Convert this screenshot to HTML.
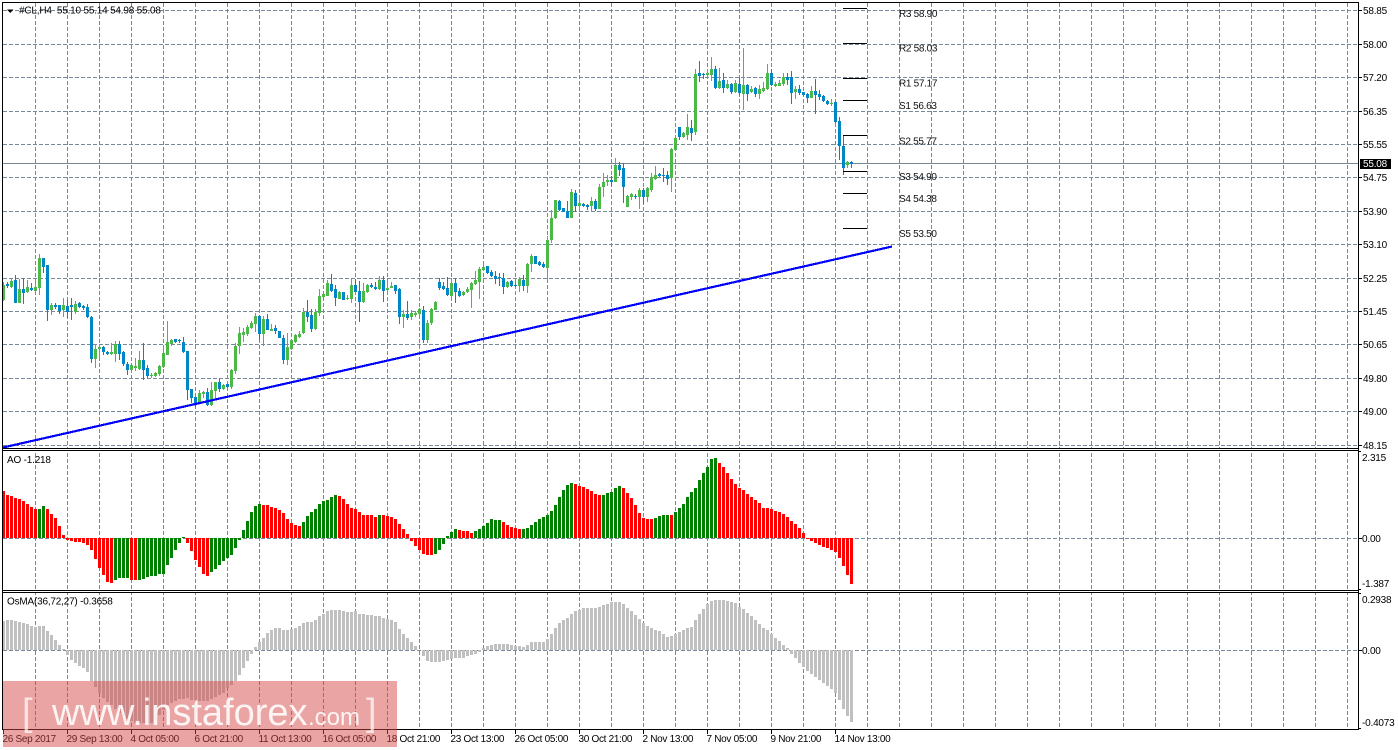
<!DOCTYPE html>
<html><head><meta charset="utf-8"><title>#CL,H4</title>
<style>
html,body{margin:0;padding:0;background:#fff;width:1398px;height:750px;overflow:hidden}
svg{display:block}
text{font-family:"Liberation Sans",sans-serif;font-size:10px;fill:#000}
.t{letter-spacing:-.3px}
.v{letter-spacing:-.2px}
.p{letter-spacing:-.3px;fill:#111}
</style></head><body>
<svg width="1398" height="750" viewBox="0 0 1398 750" xmlns="http://www.w3.org/2000/svg">
<rect width="1398" height="750" fill="#fff"/>
<g shape-rendering="crispEdges" fill="none">
<!-- grid -->
<path stroke="#778899" stroke-width="1" stroke-dasharray="4 2" d="M35.5 3V729M67.5 3V729M99.5 3V729M131.5 3V729M163.5 3V729M195.5 3V729M227.5 3V729M259.5 3V729M291.5 3V729M323.5 3V729M355.5 3V729M387.5 3V729M419.5 3V729M451.5 3V729M483.5 3V729M515.5 3V729M547.5 3V729M579.5 3V729M611.5 3V729M643.5 3V729M675.5 3V729M707.5 3V729M739.5 3V729M771.5 3V729M803.5 3V729M835.5 3V729M867.5 3V729M899.5 3V729M931.5 3V729M963.5 3V729M995.5 3V729M1027.5 3V729M1059.5 3V729M1091.5 3V729M1123.5 3V729M1155.5 3V729M1187.5 3V729M1219.5 3V729M1251.5 3V729M1283.5 3V729M1315.5 3V729M1347.5 3V729"/>
<path stroke="#778899" stroke-width="1" stroke-dasharray="4 2" d="M3 10.5H1358M3 44.5H1358M3 77.5H1358M3 111.5H1358M3 144.5H1358M3 177.5H1358M3 211.5H1358M3 244.5H1358M3 278.5H1358M3 311.5H1358M3 344.5H1358M3 378.5H1358M3 411.5H1358M3 445.5H1358M3 538.5H1358M3 650.5H1358"/>
<path stroke="#778899" d="M3 163.5H1358"/>
<!-- green candles -->
<path stroke="#4cb848" stroke-width="1" d="M3.5 282V301M11.5 278V288M19.5 279V303M27.5 280V293M35.5 282V292M39.5 254V295M51.5 303V315M63.5 298V317M75.5 301V314M95.5 344V368M99.5 345V359M111.5 343V355M115.5 341V362M131.5 364V372M135.5 358V371M139.5 351V370M151.5 373V378M155.5 372V377M159.5 365V376M163.5 347V368M167.5 321V355M171.5 339V346M199.5 390V403M203.5 391V398M211.5 382V406M215.5 382V400M223.5 384V390M231.5 369V389M235.5 343V374M239.5 327V354M243.5 328V342M247.5 325V336M251.5 321V329M255.5 313V332M263.5 316V346M271.5 324V331M287.5 333V365M291.5 339V350M295.5 334V343M299.5 331V338M303.5 308V334M315.5 309V330M319.5 289V316M323.5 292V298M327.5 280V296M339.5 291V299M347.5 295V300M351.5 279V303M363.5 283V303M367.5 284V293M379.5 276V290M387.5 282V293M391.5 282V288M403.5 310V328M411.5 310V320M415.5 311V317M419.5 308V317M427.5 320V343M431.5 308V325M435.5 301V310M451.5 278V297M463.5 291V296M467.5 287V293M471.5 282V308M475.5 271V285M479.5 267V299M483.5 264V271M507.5 281V288M519.5 277V292M527.5 263V293M531.5 254V272M547.5 236V280M551.5 210V243M555.5 200V219M571.5 189V218M579.5 198V210M591.5 197V211M599.5 184V209M603.5 173V197M607.5 175V186M615.5 158V182M627.5 195V207M631.5 193V200M639.5 188V209M647.5 187V202M651.5 173V192M655.5 166V180M671.5 148V192M675.5 135V150M683.5 132V138M687.5 114V140M695.5 69V135M707.5 70V76M711.5 57V81M719.5 68V89M727.5 80V89M735.5 80V93M743.5 48V110M751.5 86V93M759.5 85V99M763.5 82V92M767.5 64V90M775.5 82V87M779.5 80V86M783.5 73V86M795.5 86V99M811.5 86V98M831.5 99V106M847.5 161V168"/>
<path stroke="#4cb848" stroke-width="3" d="M3.5 285V300M11.5 281V287M19.5 289V303M27.5 287V292M35.5 287V291M39.5 258V288M51.5 305V310M63.5 305V310M75.5 304V312M95.5 349V359M99.5 347V349M111.5 352V354M115.5 344V354M131.5 365V370M135.5 366V368M139.5 360V369M151.5 375V376M155.5 373V376M159.5 366V374M163.5 353V367M167.5 342V355M171.5 340V344M199.5 393V402M203.5 392V394M211.5 390V405M215.5 382V391M223.5 385V389M231.5 370V387M235.5 346V371M239.5 333V346M243.5 332V335M247.5 327V334M251.5 323V328M255.5 316V324M263.5 319V334M271.5 329V331M287.5 347V360M291.5 340V349M295.5 335V342M299.5 334V337M303.5 312V333M315.5 312V329M319.5 296V313M323.5 294V297M327.5 283V296M339.5 292V299M347.5 298V299M351.5 285V299M363.5 291V302M367.5 285V292M379.5 280V289M387.5 288V290M391.5 286V288M403.5 314V317M411.5 313V317M415.5 313V315M419.5 309V314M427.5 323V340M431.5 309V323M435.5 302V310M451.5 283V296M463.5 292V295M467.5 289V292M471.5 283V290M475.5 280V284M479.5 269V282M483.5 267V270M507.5 282V287M519.5 279V286M527.5 264V286M531.5 256V264M547.5 240V268M551.5 218V240M555.5 200V218M571.5 192V218M579.5 203V206M591.5 201V206M599.5 187V209M603.5 182V187M607.5 180V182M615.5 165V182M627.5 196V207M631.5 194V197M639.5 190V197M647.5 188V197M651.5 177V190M655.5 175V179M671.5 149V178M675.5 138V150M683.5 133V137M687.5 127V135M695.5 74V132M707.5 73V75M711.5 69V75M719.5 81V88M727.5 84V88M735.5 83V92M743.5 85V94M751.5 89V92M759.5 89V94M763.5 88V91M767.5 73V89M775.5 84V86M779.5 83V86M783.5 77V84M795.5 89V92M811.5 91V98M831.5 103V104M847.5 162V165"/>
<!-- blue candles -->
<path stroke="#0085c6" stroke-width="1" d="M7.5 282V288M15.5 275V303M23.5 278V304M31.5 283V291M43.5 258V273M47.5 265V321M55.5 303V309M59.5 305V314M67.5 300V318M71.5 298V320M79.5 302V308M83.5 305V310M87.5 304V318M91.5 316V363M103.5 346V355M107.5 351V355M119.5 341V360M123.5 351V366M127.5 362V375M143.5 343V380M147.5 365V378M175.5 339V343M179.5 339V343M183.5 337V353M187.5 351V400M191.5 389V403M195.5 397V407M207.5 388V406M219.5 379V392M227.5 384V388M259.5 315V340M267.5 314V330M275.5 325V334M279.5 331V338M283.5 335V364M307.5 300V322M311.5 309V332M331.5 274V292M335.5 285V306M343.5 292V300M355.5 279V292M359.5 281V322M371.5 283V288M375.5 282V290M383.5 276V302M395.5 285V294M399.5 288V324M407.5 301V320M423.5 306V343M439.5 278V290M443.5 282V290M447.5 277V296M455.5 278V303M459.5 288V297M487.5 266V274M491.5 270V277M495.5 271V284M499.5 273V286M503.5 273V294M511.5 280V287M515.5 283V287M523.5 275V291M535.5 256V264M539.5 261V266M543.5 262V268M559.5 200V211M563.5 208V212M567.5 201V218M575.5 190V212M583.5 203V207M587.5 204V210M595.5 199V211M611.5 176V186M619.5 162V176M623.5 163V203M635.5 194V199M643.5 188V204M659.5 173V177M663.5 168V182M667.5 171V185M679.5 127V140M691.5 120V141M699.5 61V82M703.5 73V79M715.5 66V89M723.5 73V93M731.5 83V94M739.5 78V95M747.5 84V101M755.5 87V97M771.5 69V86M787.5 73V85M791.5 71V104M799.5 85V95M803.5 92V96M807.5 93V103M815.5 79V114M819.5 90V100M823.5 95V102M827.5 100V105M835.5 102V123M839.5 117V160M843.5 135V175M851.5 161V168"/>
<path stroke="#0085c6" stroke-width="3" d="M7.5 284V286M15.5 280V303M23.5 289V293M31.5 288V290M43.5 258V267M47.5 265V310M55.5 305V307M59.5 305V311M67.5 306V312M71.5 305V307M79.5 303V307M83.5 306V308M87.5 307V317M91.5 317V359M103.5 347V352M107.5 352V354M119.5 344V354M123.5 352V364M127.5 364V370M143.5 360V370M147.5 368V376M175.5 339V342M179.5 340V341M183.5 342V352M187.5 351V390M191.5 389V398M195.5 397V403M207.5 392V405M219.5 382V389M227.5 384V387M259.5 316V334M267.5 319V330M275.5 328V331M279.5 331V338M283.5 338V360M307.5 312V317M311.5 315V329M331.5 284V291M335.5 289V298M343.5 292V300M355.5 285V292M359.5 291V302M371.5 285V287M375.5 287V289M383.5 280V291M395.5 285V291M399.5 289V317M407.5 314V318M423.5 310V340M439.5 282V288M443.5 286V289M447.5 288V295M455.5 283V292M459.5 291V296M487.5 266V273M491.5 272V276M495.5 276V279M499.5 277V278M503.5 278V287M511.5 281V286M515.5 285V286M523.5 280V286M535.5 256V264M539.5 262V265M543.5 264V267M559.5 201V210M563.5 208V212M567.5 211V218M575.5 193V206M583.5 204V206M587.5 205V207M595.5 201V209M611.5 180V182M619.5 165V170M623.5 168V187M635.5 196V197M643.5 190V197M659.5 174V176M663.5 175V176M667.5 175V179M679.5 127V137M691.5 128V133M699.5 73V76M703.5 74V75M715.5 69V88M723.5 80V88M731.5 84V92M739.5 84V93M747.5 85V94M755.5 88V94M771.5 73V85M787.5 77V80M791.5 77V93M799.5 89V93M803.5 92V95M807.5 94V98M815.5 91V95M819.5 94V97M823.5 96V101M827.5 101V104M835.5 102V122M839.5 121V146M843.5 146V168M851.5 162V164"/>
<!-- AO -->
<g transform="translate(0 538)" stroke-width="3">
<path stroke="#ff0000" d="M3.5 0v-47M7.5 0v-43M11.5 0v-42M15.5 0v-40M19.5 0v-39M23.5 0v-37M27.5 0v-34M31.5 0v-31M35.5 0v-29M47.5 0v-29M51.5 0v-24M55.5 0v-20M59.5 0v-12M63.5 0v-3M67.5 0v2M71.5 0v3M75.5 0v4M79.5 0v4M83.5 0v5M87.5 0v7M91.5 0v12M95.5 0v21M99.5 0v30M103.5 0v37M107.5 0v44M111.5 0v45M131.5 0v42M135.5 0v42M187.5 0v5M191.5 0v13M195.5 0v22M199.5 0v29M203.5 0v36M207.5 0v38M263.5 0v-33M267.5 0v-33M271.5 0v-31M275.5 0v-30M279.5 0v-28M283.5 0v-25M287.5 0v-19M291.5 0v-15M295.5 0v-13M299.5 0v-12M339.5 0v-42M343.5 0v-39M347.5 0v-34M351.5 0v-30M355.5 0v-29M359.5 0v-26M363.5 0v-23M367.5 0v-23M371.5 0v-23M375.5 0v-21M383.5 0v-23M387.5 0v-22M391.5 0v-21M395.5 0v-19M399.5 0v-14M403.5 0v-9M407.5 0v-4M411.5 0v3M415.5 0v8M419.5 0v12M423.5 0v16M427.5 0v17M431.5 0v17M459.5 0v-8M463.5 0v-7M467.5 0v-7M471.5 0v-5M503.5 0v-16M507.5 0v-13M511.5 0v-11M515.5 0v-10M519.5 0v-9M575.5 0v-54M579.5 0v-52M583.5 0v-51M587.5 0v-49M591.5 0v-47M595.5 0v-44M599.5 0v-43M623.5 0v-50M627.5 0v-45M631.5 0v-40M635.5 0v-33M639.5 0v-25M643.5 0v-20M647.5 0v-19M651.5 0v-19M671.5 0v-23M719.5 0v-75M723.5 0v-71M727.5 0v-65M731.5 0v-59M735.5 0v-54M739.5 0v-50M743.5 0v-48M747.5 0v-44M751.5 0v-41M755.5 0v-38M759.5 0v-35M763.5 0v-30M767.5 0v-30M771.5 0v-29M775.5 0v-27M779.5 0v-26M783.5 0v-24M787.5 0v-21M791.5 0v-17M795.5 0v-14M799.5 0v-10M803.5 0v-5M807.5 0v1M811.5 0v3M815.5 0v5M819.5 0v7M823.5 0v9M827.5 0v10M831.5 0v12M835.5 0v14M839.5 0v20M843.5 0v28M847.5 0v37M851.5 0v46"/>
<path stroke="#008000" d="M39.5 0v-29M43.5 0v-32M115.5 0v42M119.5 0v40M123.5 0v40M127.5 0v40M139.5 0v42M143.5 0v41M147.5 0v39M151.5 0v38M155.5 0v38M159.5 0v36M163.5 0v36M167.5 0v27M171.5 0v20M175.5 0v12M179.5 0v5M183.5 0v-1M211.5 0v34M215.5 0v31M219.5 0v27M223.5 0v23M227.5 0v20M231.5 0v17M235.5 0v10M239.5 0v2M243.5 0v-8M247.5 0v-17M251.5 0v-26M255.5 0v-32M259.5 0v-34M303.5 0v-16M307.5 0v-22M311.5 0v-26M315.5 0v-29M319.5 0v-34M323.5 0v-37M327.5 0v-38M331.5 0v-41M335.5 0v-43M379.5 0v-23M435.5 0v16M439.5 0v12M443.5 0v6M447.5 0v-2M451.5 0v-6M455.5 0v-9M475.5 0v-7M479.5 0v-9M483.5 0v-12M487.5 0v-15M491.5 0v-19M495.5 0v-18M499.5 0v-18M523.5 0v-9M527.5 0v-10M531.5 0v-13M535.5 0v-16M539.5 0v-19M543.5 0v-21M547.5 0v-23M551.5 0v-27M555.5 0v-33M559.5 0v-41M563.5 0v-48M567.5 0v-53M571.5 0v-55M603.5 0v-43M607.5 0v-45M611.5 0v-46M615.5 0v-50M619.5 0v-52M655.5 0v-20M659.5 0v-22M663.5 0v-23M667.5 0v-23M675.5 0v-26M679.5 0v-30M683.5 0v-34M687.5 0v-41M691.5 0v-46M695.5 0v-50M699.5 0v-58M703.5 0v-65M707.5 0v-71M711.5 0v-79M715.5 0v-80"/>
</g>
<!-- OsMA -->
<g transform="translate(0 650)" stroke-width="3">
<path stroke="#c0c0c0" d="M3.5 0v-29M7.5 0v-30M11.5 0v-30M15.5 0v-29M19.5 0v-28M23.5 0v-27M27.5 0v-26M31.5 0v-24M35.5 0v-23M39.5 0v-24M43.5 0v-24M47.5 0v-19M51.5 0v-15M55.5 0v-10M59.5 0v-5M63.5 0v-1M67.5 0v5M71.5 0v10M75.5 0v13M79.5 0v16M83.5 0v18M87.5 0v22M91.5 0v31M95.5 0v37M99.5 0v43M103.5 0v48M107.5 0v52M111.5 0v55M115.5 0v59M119.5 0v63M123.5 0v66M127.5 0v69M131.5 0v71M135.5 0v73M139.5 0v73M143.5 0v73M147.5 0v73M151.5 0v73M155.5 0v70M159.5 0v65M163.5 0v60M167.5 0v55M171.5 0v53M175.5 0v51M179.5 0v49M183.5 0v49M187.5 0v48M191.5 0v50M195.5 0v50M199.5 0v51M203.5 0v51M207.5 0v51M211.5 0v49M215.5 0v47M219.5 0v45M223.5 0v43M227.5 0v38M231.5 0v35M235.5 0v31M239.5 0v25M243.5 0v18M247.5 0v11M251.5 0v4M255.5 0v-3M259.5 0v-8M263.5 0v-12M267.5 0v-17M271.5 0v-20M275.5 0v-22M279.5 0v-22M283.5 0v-20M287.5 0v-20M291.5 0v-21M295.5 0v-22M299.5 0v-24M303.5 0v-27M307.5 0v-28M311.5 0v-28M315.5 0v-30M319.5 0v-34M323.5 0v-36M327.5 0v-39M331.5 0v-40M335.5 0v-40M339.5 0v-40M343.5 0v-39M347.5 0v-38M351.5 0v-38M355.5 0v-39M359.5 0v-36M363.5 0v-36M367.5 0v-35M371.5 0v-35M375.5 0v-34M379.5 0v-34M383.5 0v-32M387.5 0v-31M391.5 0v-30M395.5 0v-28M399.5 0v-21M403.5 0v-16M407.5 0v-12M411.5 0v-8M415.5 0v-4M423.5 0v6M427.5 0v11M431.5 0v12M435.5 0v12M439.5 0v12M443.5 0v11M447.5 0v10M451.5 0v9M455.5 0v8M459.5 0v8M463.5 0v8M467.5 0v6M471.5 0v5M475.5 0v4M479.5 0v2M483.5 0v-2M487.5 0v-4M491.5 0v-5M495.5 0v-6M499.5 0v-6M503.5 0v-6M507.5 0v-6M511.5 0v-5M515.5 0v-4M519.5 0v-4M523.5 0v-3M527.5 0v-5M531.5 0v-8M535.5 0v-8M539.5 0v-8M543.5 0v-8M547.5 0v-11M551.5 0v-16M555.5 0v-22M559.5 0v-27M563.5 0v-30M567.5 0v-32M571.5 0v-36M575.5 0v-39M579.5 0v-40M583.5 0v-42M587.5 0v-42M591.5 0v-42M595.5 0v-42M599.5 0v-43M603.5 0v-45M607.5 0v-46M611.5 0v-48M615.5 0v-48M619.5 0v-48M623.5 0v-46M627.5 0v-42M631.5 0v-39M635.5 0v-35M639.5 0v-31M643.5 0v-27M647.5 0v-24M651.5 0v-22M655.5 0v-20M659.5 0v-19M663.5 0v-16M667.5 0v-13M671.5 0v-14M675.5 0v-16M679.5 0v-18M683.5 0v-20M687.5 0v-22M691.5 0v-23M695.5 0v-30M699.5 0v-36M703.5 0v-41M707.5 0v-46M711.5 0v-49M715.5 0v-50M719.5 0v-50M723.5 0v-50M727.5 0v-49M731.5 0v-48M735.5 0v-47M739.5 0v-43M743.5 0v-41M747.5 0v-37M751.5 0v-34M755.5 0v-30M759.5 0v-26M763.5 0v-22M767.5 0v-20M771.5 0v-16M775.5 0v-12M779.5 0v-9M783.5 0v-5M787.5 0v-2M791.5 0v4M795.5 0v8M799.5 0v13M803.5 0v17M807.5 0v21M811.5 0v24M815.5 0v27M819.5 0v30M823.5 0v33M827.5 0v36M831.5 0v39M835.5 0v43M839.5 0v50M843.5 0v59M847.5 0v66M851.5 0v72"/>
</g>
<!-- pivot lines -->
<path stroke="#000" d="M843 8.5H867M843 43.5H867M843 78.5H867M843 100.5H867M843 135.5H867M843 171.5H867M843 193.5H867M843 228.5H867"/>
<!-- panel frames -->
<rect x="3" y="449" width="1355" height="1" fill="#fff"/>
<rect x="3" y="591" width="1355" height="1" fill="#fff"/>
<path stroke="#000" d="M2.5 2V730M2 2.5H1359M1358.5 2V730M2 448.5H1359M2 450.5H1359M2 590.5H1359M2 592.5H1359M2 729.5H1359"/>
<!-- axis ticks -->
<path stroke="#000" d="M1359 10.5h3M1359 44.5h3M1359 77.5h3M1359 111.5h3M1359 144.5h3M1359 177.5h3M1359 211.5h3M1359 244.5h3M1359 278.5h3M1359 311.5h3M1359 344.5h3M1359 378.5h3M1359 411.5h3M1359 445.5h3M1359 451.5h2M1359 538.5h3M1359 589.5h2M1359 593.5h2M1359 650.5h3M1359 728.5h2M3.5 730v4M67.5 730v4M131.5 730v4M195.5 730v4M259.5 730v4M323.5 730v4M387.5 730v4M451.5 730v4M515.5 730v4M579.5 730v4M643.5 730v4M707.5 730v4M771.5 730v4M835.5 730v4"/>
<!-- trend line -->
<path stroke="#0000ff" stroke-width="2.2" d="M3 447.5L892 246.5"/>
<!-- price tag -->
<rect x="1360" y="159" width="31" height="10" fill="#000"/>
</g>
<!-- top label -->
<path d="M7 9.5h6.5l-3.25 3.5z" fill="#000"/>
<text x="19" y="13.5" class="v">#CL,H4&#160; 55.10 55.14 54.98 55.08</text>
<text x="7" y="463" class="v">AO -1.218</text>
<text x="7" y="604.5" class="v">OsMA(36,72,27) -0.3658</text>
<!-- pivot labels -->
<g class="p">
<text class="p" x="899" y="17">R3 58.90</text>
<text class="p" x="899" y="51.5">R2 58.03</text>
<text class="p" x="899" y="86.5">R1 57.17</text>
<text class="p" x="899" y="109">S1 56.63</text>
<text class="p" x="899" y="144.5">S2 55.77</text>
<text class="p" x="899" y="180">S3 54.90</text>
<text class="p" x="899" y="202">S4 54.38</text>
<text class="p" x="899" y="237">S5 53.50</text>
</g>
<!-- right axis -->
<g>
<text class="v" x="1363" y="14">58.85</text>
<text class="v" x="1363" y="48">58.00</text>
<text class="v" x="1363" y="81">57.20</text>
<text class="v" x="1363" y="115">56.35</text>
<text class="v" x="1363" y="148">55.55</text>
<text class="v" x="1363" y="167" style="fill:#fff">55.08</text>
<text class="v" x="1363" y="181">54.75</text>
<text class="v" x="1363" y="215">53.90</text>
<text class="v" x="1363" y="248">53.10</text>
<text class="v" x="1363" y="282">52.25</text>
<text class="v" x="1363" y="315">51.45</text>
<text class="v" x="1363" y="348">50.65</text>
<text class="v" x="1363" y="382">49.80</text>
<text class="v" x="1363" y="415">49.00</text>
<text class="v" x="1363" y="449">48.15</text>
<text class="v" x="1362" y="461">2.315</text>
<text class="v" x="1362" y="542">0.00</text>
<text class="v" x="1362" y="587">-1.387</text>
<text class="v" x="1362" y="603">0.2938</text>
<text class="v" x="1362" y="654">0.00</text>
<text class="v" x="1362" y="726">-0.4073</text>
</g>
<!-- time axis -->
<g>
<text class="t" x="2.5" y="742">26 Sep 2017</text>
<text class="t" x="66.5" y="742">29 Sep 13:00</text>
<text class="t" x="130.5" y="742">4 Oct 05:00</text>
<text class="t" x="194.5" y="742">6 Oct 21:00</text>
<text class="t" x="258.5" y="742">11 Oct 13:00</text>
<text class="t" x="322.5" y="742">16 Oct 05:00</text>
<text class="t" x="386.5" y="742">18 Oct 21:00</text>
<text class="t" x="450.5" y="742">23 Oct 13:00</text>
<text class="t" x="514.5" y="742">26 Oct 05:00</text>
<text class="t" x="578.5" y="742">30 Oct 21:00</text>
<text class="t" x="642.5" y="742">2 Nov 13:00</text>
<text class="t" x="706.5" y="742">7 Nov 05:00</text>
<text class="t" x="770.5" y="742">9 Nov 21:00</text>
<text class="t" x="834.5" y="742">14 Nov 13:00</text>
</g>
<!-- watermark -->
<rect x="3" y="681" width="394" height="66" fill="#d74646" fill-opacity=".49"/>
<text x="22" y="725" style="font-size:38px;fill:#fff;fill-opacity:.7">[</text>
<text x="52" y="725" style="font-size:38px;fill:#fff;fill-opacity:.88">www.instaforex</text>
<text x="308" y="725" style="font-size:24px;fill:#fff;fill-opacity:.88">.com</text>
<text x="366" y="725" style="font-size:38px;fill:#fff;fill-opacity:.7">]</text>
</svg>
</body></html>
